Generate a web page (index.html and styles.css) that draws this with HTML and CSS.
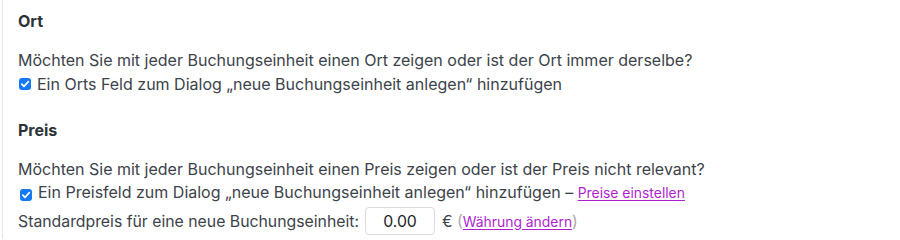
FILE: index.html
```html
<!DOCTYPE html>
<html lang="de">
<head>
<meta charset="utf-8">
<link rel="stylesheet" href="styles.css">
</head>
<body>
<div class="panel">
  <section class="group">
    <h3 class="title">Ort</h3>
    <p class="question">Möchten Sie mit jeder Buchungseinheit einen Ort zeigen oder ist der Ort immer derselbe?</p>
    <label class="row">
      <span class="cb"><svg viewBox="0 0 12 12" width="12" height="12"><path d="M2.8 6.2 L5 8.4 L9.3 3.6" fill="none" stroke="#fff" stroke-width="1.7" stroke-linecap="round" stroke-linejoin="round"/></svg></span>
      <span>Ein Orts Feld zum Dialog „neue Buchungseinheit anlegen“ hinzufügen</span>
    </label>
  </section>
  <section class="group group-second">
    <h3 class="title">Preis</h3>
    <p class="question">Möchten Sie mit jeder Buchungseinheit einen Preis zeigen oder ist der Preis nicht relevant?</p>
    <label class="row row-low">
      <span class="cb cb-low"><svg viewBox="0 0 12 12" width="12" height="12"><path d="M2.8 6.2 L5 8.4 L9.3 3.6" fill="none" stroke="#fff" stroke-width="1.7" stroke-linecap="round" stroke-linejoin="round"/></svg></span>
      <span>Ein Preisfeld zum Dialog „neue Buchungseinheit anlegen“ hinzufügen – <a class="link" href="#">Preise einstellen</a></span>
    </label>
    <div class="price-row">
      <span>Standardpreis für eine neue Buchungseinheit:</span>
      <span class="price-input">0.00</span>
      <span class="currency">€ <span class="paren">(</span><a class="link" href="#">Währung ändern</a><span class="paren">)</span></span>
    </div>
  </section>
</div>
</body>
</html>
```
FILE: styles.css
```css
html, body {
  margin: 0;
  padding: 0;
  background: #ffffff;
}
body {
  font-family: Inter, "Noto Sans", sans-serif;
  font-size: 16px;
  color: #3c434a;
  width: 900px;
  height: 239px;
  overflow: hidden;
}
.panel {
  margin-left: 2px;
  border-left: 1px solid #e2e4e7;
  padding-left: 15px;
  padding-top: 11px;
  height: 239px;
  box-sizing: border-box;
}
.group {
  display: flex;
  flex-direction: column;
}
.group-second {
  margin-top: 24px;
}
.title {
  margin: 0;
  font-size: 16px;
  line-height: 20px;
  font-weight: 700;
  color: #2c3338;
}
.question {
  margin: 17px 0 0;
  line-height: 24px;
}
.row {
  display: flex;
  align-items: center;
  gap: 6px;
  line-height: 24px;
}
.row-low {
  line-height: 22px;
}
.cb {
  display: inline-flex;
  align-items: center;
  justify-content: center;
  flex: none;
  width: 12px;
  height: 12px;
  margin-left: 1px;
  border-radius: 3px;
  background: #1479f3;
}
.cb-low {
  margin-top: 5px;
  margin-left: 2px;
}
.link {
  color: #b01fcf;
  font-size: 13.9px;
  text-decoration: underline;
  text-underline-offset: 2px;
}
.price-row {
  display: flex;
  align-items: center;
  height: 30px;
  margin-top: 2px;
  font-size: 15.8px;
}
.price-input {
  display: inline-flex;
  align-items: center;
  justify-content: center;
  box-sizing: border-box;
  width: 70px;
  height: 28px;
  margin-left: 6px;
  border: 1px solid #dcdcde;
  border-radius: 4px;
  color: #1d2327;
}
.currency {
  margin-left: 7px;
}
.paren {
  color: #a7aaad;
}
```
